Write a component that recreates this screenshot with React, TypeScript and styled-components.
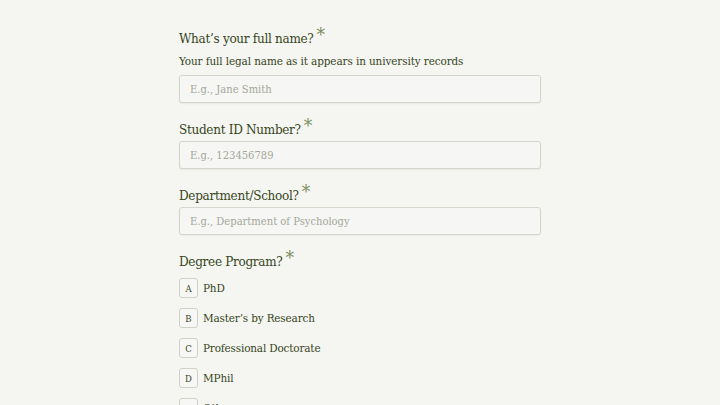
import styled, { createGlobalStyle } from "styled-components";

const GlobalStyle = createGlobalStyle`
  html, body {
    margin: 0;
    padding: 0;
    background: #f5f5f2;
  }
  body {
    font-family: "DejaVu Serif Condensed", "DejaVu Serif", serif;
    color: #35461b;
  }
`;

const Page = styled.div`
  width: 362px;
  margin: 0 auto;
  padding-top: 26px;
  display: flex;
  flex-direction: column;
`;

const Field = styled.div`
  display: flex;
  flex-direction: column;
  margin-bottom: 14px;
`;

const Label = styled.label`
  font-size: 13.4px;
  letter-spacing: -0.3px;
  line-height: 20px;
  height: 20px;
  margin-bottom: 4px;
  color: #35461b;
`;

const Star = styled.span`
  color: #7d8f5e;
  font-size: 19px;
  margin-left: 3px;
  position: relative;
  top: -2px;
`;

const Hint = styled.p`
  margin: 3px 0 5px;
  font-size: 11.6px;
  letter-spacing: -0.1px;
  line-height: 17px;
  color: #35461b;
`;

const Input = styled.input`
  box-sizing: border-box;
  width: 100%;
  height: 28px;
  padding: 0 10px;
  font-family: inherit;
  font-size: 11.1px;
  color: #35461b;
  background: #f6f6f4;
  border: 1px solid #d3d6cb;
  border-radius: 3px;
  box-shadow: 0 1px 2px rgba(0, 0, 0, 0.06);
  outline: none;

  &::placeholder {
    color: #a4a899;
  }
`;

const Options = styled.div`
  display: flex;
  flex-direction: column;
  gap: 10px;
  margin-top: 5px;
`;

const Option = styled.div`
  display: flex;
  align-items: center;
  gap: 5px;
  height: 20px;
`;

const Key = styled.span`
  box-sizing: border-box;
  width: 19px;
  height: 20px;
  display: flex;
  align-items: center;
  justify-content: center;
  font-size: 9.5px;
  border: 1px solid #cfd2c6;
  border-radius: 3px;
  background: #f7f7f5;
  color: #35461b;
`;

const OptionText = styled.span`
  font-size: 11.6px;
  letter-spacing: -0.15px;
  color: #35461b;
`;

const degrees = [
  { key: "A", label: "PhD" },
  { key: "B", label: "Master’s by Research" },
  { key: "C", label: "Professional Doctorate" },
  { key: "D", label: "MPhil" },
  { key: "E", label: "Other" },
];

export default function App() {
  return (
    <>
      <GlobalStyle />
      <Page>
        <Field>
          <Label>
            What’s your full name?<Star>*</Star>
          </Label>
          <Hint>Your full legal name as it appears in university records</Hint>
          <Input placeholder="E.g., Jane Smith" />
        </Field>
        <Field>
          <Label>
            Student ID Number?<Star>*</Star>
          </Label>
          <Input placeholder="E.g., 123456789" />
        </Field>
        <Field>
          <Label>
            Department/School?<Star>*</Star>
          </Label>
          <Input placeholder="E.g., Department of Psychology" />
        </Field>
        <Field>
          <Label>
            Degree Program?<Star>*</Star>
          </Label>
          <Options>
            {degrees.map((d) => (
              <Option key={d.key}>
                <Key>{d.key}</Key>
                <OptionText>{d.label}</OptionText>
              </Option>
            ))}
          </Options>
        </Field>
      </Page>
    </>
  );
}
